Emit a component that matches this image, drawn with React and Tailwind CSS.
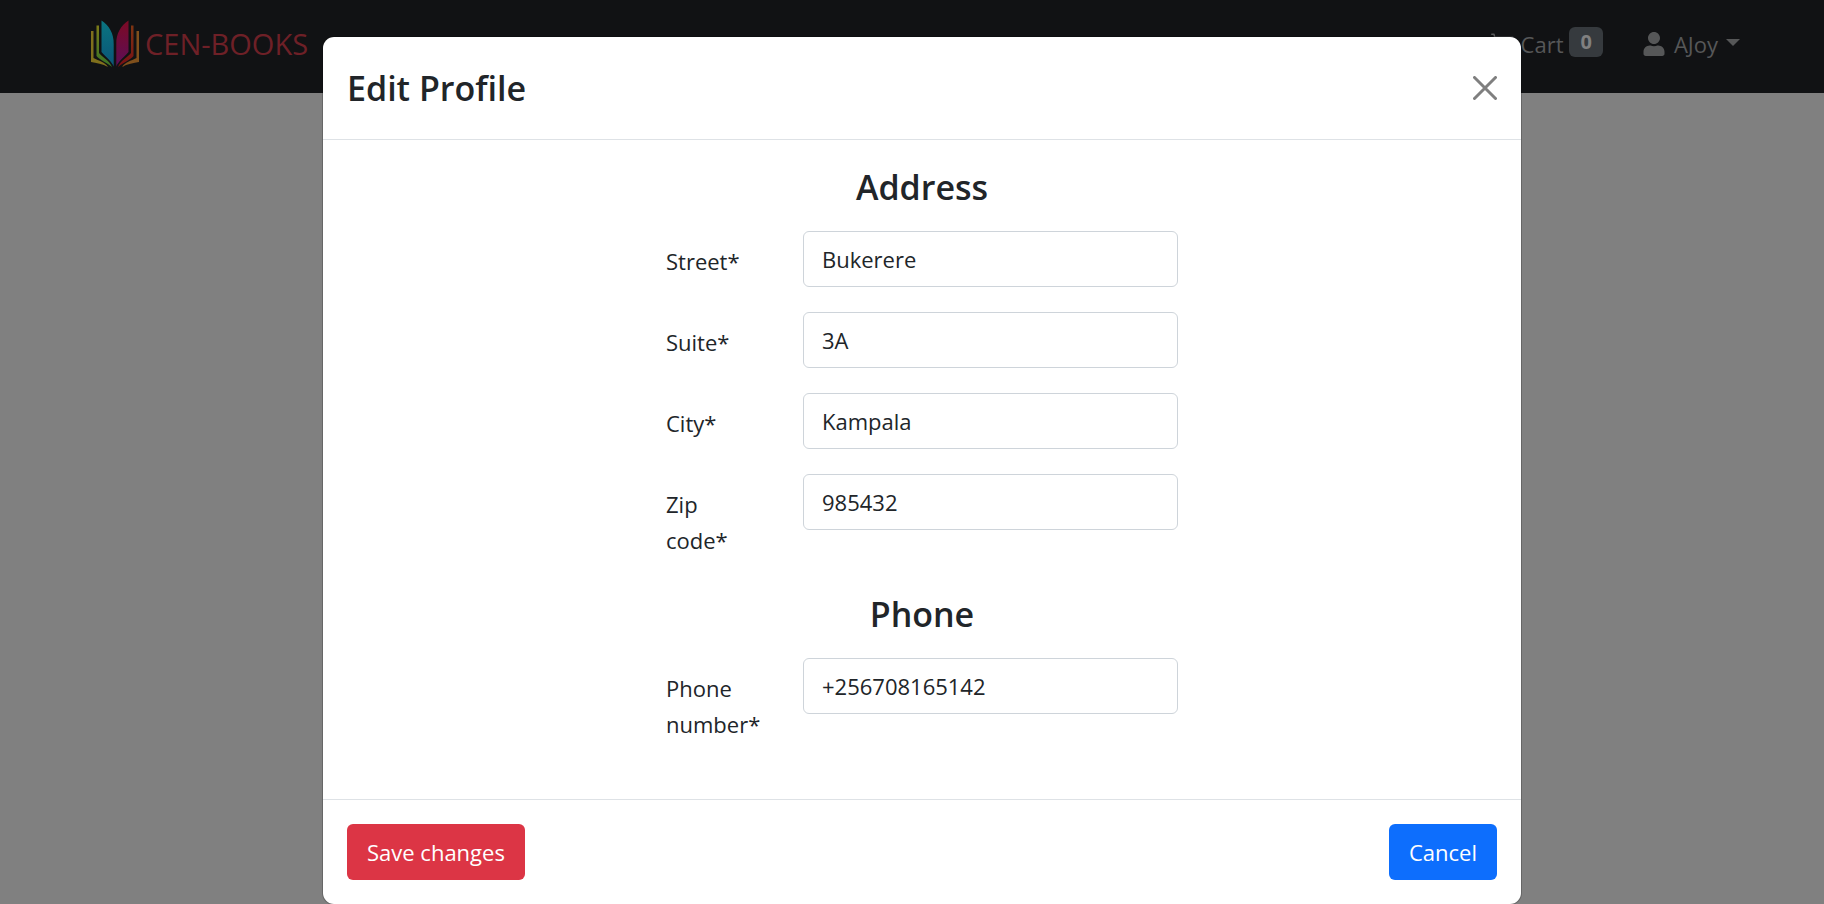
import { FaUser } from "react-icons/fa";

function Logo() {
  return (
    <svg viewBox="0 0 48 48" className="size-12 shrink-0" aria-hidden="true">
      <defs>
        <linearGradient id="teal" x1="0" y1="0" x2="0" y2="1">
          <stop offset="0" stopColor="#0a7580" />
          <stop offset="1" stopColor="#0b5578" />
        </linearGradient>
        <linearGradient id="plum" x1="0" y1="0" x2="0" y2="1">
          <stop offset="0" stopColor="#7c0a24" />
          <stop offset="1" stopColor="#5c0e58" />
        </linearGradient>
        <linearGradient id="red" x1="0" y1="0" x2="0" y2="1">
          <stop offset="0" stopColor="#7e3512" />
          <stop offset="1" stopColor="#780f14" />
        </linearGradient>
        <linearGradient id="green" x1="0" y1="0" x2="0" y2="1">
          <stop offset="0" stopColor="#7c7a18" />
          <stop offset="1" stopColor="#377426" />
        </linearGradient>
      </defs>
      <path d="M10.500 0.500C18 5 23 14 22.700 24V46.500C21 42 16 38 10.500 32Z" fill="url(#teal)" />
      <path d="M37.500 0.500C30 5 25 14 25.300 24V46.500C27 42 32 38 37.500 32Z" fill="url(#plum)" />
      <path d="M5.500 5.500H8V33C12 38 18 40 21 47C15 42 9 40 5.500 36Z" fill="url(#green)" />
      <path d="M42.500 5.500H40V33C36 38 30 40 27 47C33 42 39 40 42.500 36Z" fill="url(#red)" />
      <path d="M0 11H2.500V38C8 41 14 42 17 47C12 44 5 43 0 42Z" fill="#80701c" />
      <path d="M48 11H45.500V38C40 41 34 42 31 47C36 44 43 43 48 42Z" fill="#80501c" />
    </svg>
  );
}

function Field({ id, label, value, type = "text" }) {
  return (
    <div className="grid grid-cols-[93px_375px] items-start gap-x-11">
      <label htmlFor={id} className="pt-3 leading-9">
        {label}
      </label>
      <input
        id={id}
        type={type}
        defaultValue={value}
        className="h-14 w-full rounded-md border border-[#ced4da] bg-white px-[18px] outline-none"
      />
    </div>
  );
}

export default function App() {
  return (
    <div className="min-h-screen bg-[#808080] font-['Open_Sans','Noto_Sans',sans-serif] text-[22px] text-[#212529]">
      <header className="flex h-[93px] items-center justify-between bg-[#111214] pr-[84px] pb-[5px] pl-[91px] text-[#565758]">
        <a href="#home" className="flex items-center gap-1.5 text-[29px] text-[#6e2027]">
          <Logo />
          CEN-BOOKS
        </a>
        <nav className="flex items-center gap-[39px]">
          <a href="#cart" className="flex items-center gap-1.5">
            <svg viewBox="0 0 16 16" className="size-6" fill="currentColor" aria-hidden="true">
              <path d="M0 1.500A.5.5 0 0 1 .5 1H2a.5.5 0 0 1 .485.379L2.890 3H14.500a.5.5 0 0 1 .491.592l-1.500 8A.5.5 0 0 1 13 12H4a.5.5 0 0 1-.491-.408L2.010 3.607 1.610 2H.5a.5.5 0 0 1-.5-.5M3.102 4l1.313 7h8.170l1.313-7z" />
            </svg>
            Cart
            <span className="mb-1 rounded-md bg-[#363a3e] px-[11px] py-[3px] text-xl leading-6 font-bold text-[#808080]">0</span>
          </a>
          <button type="button" className="flex items-center gap-2">
            <FaUser className="size-6" />
            AJoy
            <svg viewBox="0 0 14 7" className="mb-1 w-3.5" fill="currentColor" aria-hidden="true">
              <path d="M0 0H14L7 7Z" />
            </svg>
          </button>
        </nav>
      </header>

      <div className="absolute inset-x-0 top-0 flex justify-center pt-9 pl-5">
        <div role="dialog" aria-modal="true" aria-labelledby="title" className="w-full max-w-[1200px] rounded-xl border border-black/20 bg-white bg-clip-padding">
          <div className="flex h-[103px] items-center justify-between border-b border-[#dee2e6] px-6">
            <h1 id="title" className="text-[34px] font-semibold">Edit Profile</h1>
            <button type="button" aria-label="Close" className="text-[#7f7f7f]">
              <svg viewBox="0 0 24 24" className="size-6" fill="none" stroke="currentColor" strokeWidth="3" strokeLinecap="round" aria-hidden="true">
                <path d="M1.500 1.500L22.500 22.500M22.500 1.500L1.500 22.500" />
              </svg>
            </button>
          </div>

          <form id="profile" className="flex flex-col items-center gap-[33px] pt-6 pb-[57px]">
            <section className="flex flex-col items-center">
              <h2 className="mb-5 text-[34px] leading-[47px] font-semibold">Address</h2>
              <div className="flex flex-col gap-[25px]">
                <Field id="street" label="Street*" value="Bukerere" />
                <Field id="suite" label="Suite*" value="3A" />
                <Field id="city" label="City*" value="Kampala" />
                <Field id="zip" label="Zip code*" value="985432" />
              </div>
            </section>
            <section className="flex flex-col items-center">
              <h2 className="mb-5 text-[34px] leading-[47px] font-semibold">Phone</h2>
              <Field id="phone" label="Phone number*" value="+256708165142" type="tel" />
            </section>
          </form>

          <div className="flex justify-between border-t border-[#dee2e6] p-6">
            <button type="submit" form="profile" className="h-14 rounded-md bg-[#dc3545] px-5 text-white">Save changes</button>
            <button type="button" className="h-14 rounded-md bg-[#0d6efd] px-5 text-white">Cancel</button>
          </div>
        </div>
      </div>
    </div>
  );
}
